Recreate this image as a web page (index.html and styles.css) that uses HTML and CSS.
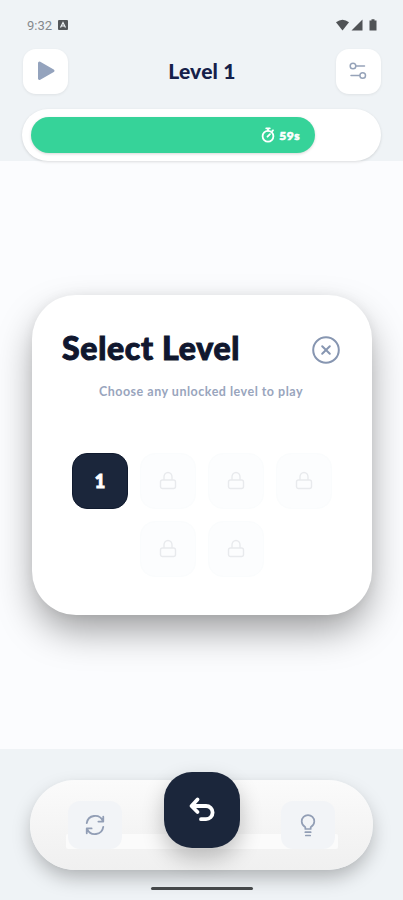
FILE: index.html
```html
<!DOCTYPE html>
<html lang="en">
<head>
    <meta charset="UTF-8">
    <meta name="viewport" content="width=device-width, initial-scale=1.0">
    <title>Select Level</title>
    <link rel="stylesheet" href="styles.css">
</head>
<body>
    <div class="app">
        <header class="header">
            <div class="status-bar">
                <span class="clock">9:32</span>
                <svg class="status-app" width="10" height="10" viewBox="0 0 10 10">
                    <rect width="10" height="10" rx="1" fill="#54575a"/>
                    <path d="M2.5 7.5L5 2.5L7.5 7.5M3.5 6h3" fill="none" stroke="#eff3f6" stroke-width="1.2"/>
                </svg>
                <svg class="status-icons" width="42" height="14" viewBox="0 0 42 14">
                    <path d="M0 4.2Q6.5 -0.8 13 4.2L6.5 12.5Z" fill="#505356"/>
                    <path d="M15.5 12.5L26.5 1.5V12.5Z" fill="#505356"/>
                    <path d="M33.5 2.5h2V1.3h3V2.5h2V12.5H33.5Z" fill="#505356"/>
                </svg>
            </div>
            <div class="top-bar">
                <button class="icon-button" aria-label="Play">
                    <svg width="20" height="22" viewBox="0 0 20 22">
                        <path d="M3.5 3L17 10.7L3.5 18.5Z" fill="#94a3bd" stroke="#94a3bd" stroke-width="3" stroke-linejoin="round"/>
                    </svg>
                </button>
                <h1 class="level-title">Level 1</h1>
                <button class="icon-button" aria-label="Settings">
                    <svg width="18" height="18" viewBox="0 0 18 18" fill="none" stroke="#96a3b9" stroke-width="1.5" stroke-linecap="round">
                        <circle cx="4" cy="4" r="2.8"/>
                        <path d="M7 4H15.5M2 13.5H10.5"/>
                        <circle cx="13.7" cy="13.5" r="2.8"/>
                    </svg>
                </button>
            </div>
            <div class="timer">
                <div class="timer-fill">
                    <svg width="14" height="16" viewBox="0 0 14 16" fill="none" stroke="#fff" stroke-width="1.8" stroke-linecap="round">
                        <circle cx="7" cy="9.2" r="5.4"/>
                        <path d="M5.2 1.3H8.8M7 1.3V3.5M6.5 9.7L9 7.2M11.3 4L12 3.3"/>
                    </svg>
                    <span class="timer-text">59s</span>
                </div>
            </div>
        </header>

        <main class="board">
            <section class="modal">
                <div class="modal-header">
                    <h2 class="modal-title">Select Level</h2>
                    <button class="close-button" aria-label="Close">
                        <svg width="28" height="28" viewBox="0 0 28 28" fill="none" stroke="#8796b1" stroke-width="2" stroke-linecap="round">
                            <circle cx="14" cy="14" r="12.8"/>
                            <path d="M10.2 10.2L17.8 17.8M17.8 10.2L10.2 17.8"/>
                        </svg>
                    </button>
                </div>
                <p class="modal-text">Choose any unlocked level to play</p>
                <div class="levels" id="levels">
                    <button class="level level-open">1</button>
                </div>
            </section>
        </main>

        <footer class="footer">
            <div class="toolbar">
                <div class="toolbar-strip"></div>
                <button class="tool" aria-label="Restart">
                    <svg width="22" height="22" viewBox="0 0 24 24" fill="none" stroke="#929eb5" stroke-width="2" stroke-linecap="round" stroke-linejoin="round">
                        <path d="M3 10A9.2 9.2 0 0 1 20.5 7.5M21 3V8.3H15.7M21 14A9.2 9.2 0 0 1 3.5 16.5M3 21V15.7H8.3"/>
                    </svg>
                </button>
                <button class="undo" aria-label="Undo">
                    <svg width="28" height="28" viewBox="0 0 28 28" fill="none" stroke="#fff" stroke-width="3.8" stroke-linecap="round" stroke-linejoin="round">
                        <path d="M9.5 3.5L3.5 10L9.5 16M4 10H18A6.6 6.6 0 0 1 18 23.2H13"/>
                    </svg>
                </button>
                <button class="tool" aria-label="Hint">
                    <svg width="24" height="24" viewBox="0 0 24 24" fill="none" stroke="#929eb5" stroke-width="1.7" stroke-linecap="round" stroke-linejoin="round">
                        <path d="M9.3 16V14.3C7.5 13 5.7 11 5.7 8.4A6.3 6.3 0 0 1 18.3 8.4C18.3 11 16.5 13 14.7 14.3V16ZM9.3 19.2H14.7M9.8 22.5H14.2"/>
                    </svg>
                </button>
            </div>
            <div class="home-bar"></div>
        </footer>
    </div>

    <script>
        const levels = document.getElementById('levels');

        // Levels 2 to 6 are still locked
        for (let i = 2; i <= 6; i++) {
            const level = document.createElement('button');
            level.classList.add('level');
            level.setAttribute('aria-label', `Level ${i} locked`);
            level.innerHTML = `
                <svg width="18" height="20" viewBox="0 0 18 20" fill="none" stroke="#e8eaed" stroke-width="1.4" stroke-linejoin="round">
                    <rect x="1.5" y="9" width="15" height="8.5" rx="2"/>
                    <path d="M5 9V6A4 4.5 0 0 1 13 6V9"/>
                </svg>
            `;
            levels.appendChild(level);
        }
    </script>
</body>
</html>
```

FILE: styles.css
```css
* {
    box-sizing: border-box;
}

body {
    font-family: Lato, "Open Sans", sans-serif;
    background-color: #fbfcfe;
    margin: 0;
}

button {
    display: flex;
    align-items: center;
    justify-content: center;
    padding: 0;
    border: none;
    cursor: pointer;
}

svg {
    display: block;
    flex-shrink: 0;
}

h1, h2, p {
    margin: 0;
    white-space: nowrap;
}

.app {
    display: flex;
    flex-direction: column;
    height: 900px;
    overflow: hidden;
}

.header {
    height: 161px;
    padding: 17px 22px 0;
    background-color: #eff3f6;
}

.status-bar {
    display: flex;
    align-items: center;
    height: 16px;
    padding: 0 3px 0 5px;
}

.clock {
    width: 26px;
    font-family: Roboto, sans-serif;
    font-size: 13px;
    color: #85898d;
}

.status-app {
    margin-left: 5px;
}

.status-icons {
    margin-left: auto;
}

.top-bar {
    display: flex;
    align-items: center;
    justify-content: space-between;
    height: 46px;
    margin-top: 15px;
    padding: 0 0 0 1px;
}

.icon-button {
    width: 45px;
    height: 45px;
    background-color: white;
    border-radius: 13px;
    box-shadow: 0 1px 3px rgba(0, 0, 0, 0.07);
}

.level-title {
    padding-bottom: 2px;
    font-size: 21px;
    font-weight: 900;
    letter-spacing: 0.2px;
    color: #15204a;
}

.timer {
    height: 52px;
    margin-top: 15px;
    padding: 8px 9px;
    background-color: white;
    border-radius: 26px;
    box-shadow: 0 1px 3px rgba(0, 0, 0, 0.13);
}

.timer-fill {
    display: flex;
    align-items: center;
    justify-content: flex-end;
    gap: 4px;
    width: 284px;
    height: 36px;
    padding-right: 15px;
    background-color: #36d399;
    border-radius: 18px;
    box-shadow: 0 1px 3px rgba(0, 0, 0, 0.16);
}

.timer-text {
    font-size: 12px;
    font-weight: 900;
    letter-spacing: 0.5px;
    color: white;
    -webkit-text-stroke: 0.6px white;
}

.board {
    height: 588px;
    padding: 134px 31px 0 32px;
}

.modal {
    height: 320px;
    padding: 32px 32px 0 30px;
    background-color: white;
    border-radius: 44px;
    box-shadow: 0 18px 38px -4px rgba(0, 0, 0, 0.4), 0 0 12px rgba(0, 0, 0, 0.05);
}

.modal-header {
    display: flex;
    align-items: center;
    justify-content: space-between;
    height: 40px;
}

.modal-title {
    font-size: 32px;
    font-weight: 900;
    letter-spacing: 0.7px;
    color: #10172e;
    -webkit-text-stroke: 1px #10172e;
}

.close-button {
    margin-top: 6px;
    background: none;
}

.modal-text {
    margin-top: 17px;
    font-size: 12.5px;
    font-weight: 700;
    line-height: 16px;
    letter-spacing: 0.5px;
    text-align: center;
    color: #99a5bd;
}

.levels {
    display: flex;
    flex-wrap: wrap;
    justify-content: center;
    gap: 12px;
    margin: 53px -2px 0 0;
}

.level {
    width: 56px;
    height: 56px;
    background-color: #fcfdfe;
    border: 1px solid #fafcfd;
    border-radius: 15px;
}

.level-open {
    background-color: #1b263b;
    border: 1px solid #101a2e;
    font-family: inherit;
    font-size: 18px;
    font-weight: 900;
    color: white;
    -webkit-text-stroke: 1px white;
}

.footer {
    height: 151px;
    padding: 31px 30px 0;
    background-color: #eff3f6;
}

.toolbar {
    position: relative;
    display: flex;
    justify-content: space-between;
    height: 90px;
    padding: 0 38px;
    background: linear-gradient(#fbfbfb, #f4f4f4 60%, #f0f0f0);
    border-radius: 45px;
    box-shadow: 0 9px 20px -2px rgba(0, 0, 0, 0.28), 0 0 4px rgba(0, 0, 0, 0.02);
}

/* Light band behind the buttons */
.toolbar-strip {
    position: absolute;
    left: 36px;
    right: 35px;
    top: 54px;
    height: 15px;
    background-color: #fbfbfb;
    border-radius: 2px;
}

.tool {
    position: relative;
    width: 54px;
    height: 48px;
    margin-top: 21px;
    background-color: #f2f4f7;
    border-radius: 12px;
}

.undo {
    position: relative;
    width: 76px;
    height: 76px;
    margin-top: -8px;
    background-color: #1b263b;
    border-radius: 28px;
    box-shadow: 0 10px 22px rgba(0, 0, 0, 0.24);
}

.home-bar {
    position: relative;
    width: 102px;
    height: 3px;
    margin: 17px auto 0;
    background-color: #45484a;
    border-radius: 2px;
}
```
